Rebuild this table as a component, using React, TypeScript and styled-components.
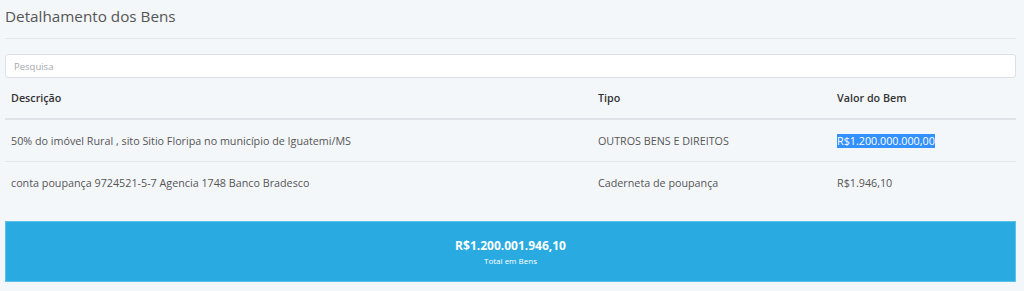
import { createGlobalStyle } from 'styled-components';
import styled from 'styled-components';

const GlobalStyle = createGlobalStyle`
  html, body {
    margin: 0;
    padding: 0;
    background: #f4f7fa;
  }
  body {
    font-family: "Open Sans", "Liberation Sans", sans-serif;
    color: #555;
  }
`

interface Bem {
  descricao: string;
  tipo: string;
  valor: string;
  selected?: boolean;
}

const bens: Bem[] = [
  {
    descricao: '50% do imóvel Rural , sito Sitio Floripa no município de Iguatemi/MS',
    tipo: 'OUTROS BENS E DIREITOS',
    valor: 'R$1.200.000.000,00',
    selected: true,
  },
  {
    descricao: 'conta poupança 9724521-5-7 Agencia 1748 Banco Bradesco',
    tipo: 'Caderneta de poupança',
    valor: 'R$1.946,10',
  },
]

export default function App() {
  return (
    <>
      <GlobalStyle />
      <Page>
        <Title>Detalhamento dos Bens</Title>
        <Divider />
        <SearchInput placeholder="Pesquisa" />
        <Table>
          <HeadRow>
            <HeadCell>Descrição</HeadCell>
            <HeadCell>Tipo</HeadCell>
            <HeadCell>Valor do Bem</HeadCell>
          </HeadRow>
          {bens.map((bem, i) => (
            <Row key={i} $last={i === bens.length - 1}>
              <Cell>{bem.descricao}</Cell>
              <Cell>{bem.tipo}</Cell>
              <Cell>{bem.selected ? <Selected>{bem.valor}</Selected> : bem.valor}</Cell>
            </Row>
          ))}
        </Table>
        <TotalBox>
          <TotalValue>R$1.200.001.946,10</TotalValue>
          <TotalLabel>Total em Bens</TotalLabel>
        </TotalBox>
      </Page>
    </>
  )
}

const Page = styled.div`
  display: flex;
  flex-direction: column;
  padding: 0 8px 0 5px;
  height: 291px;
  box-sizing: border-box;
`
const Title = styled.h3`
  margin: 0;
  padding-top: 4px;
  height: 34px;
  font-size: 15.25px;
  font-weight: 400;
  line-height: 24px;
  color: #555;
`
const Divider = styled.hr`
  margin: 0 0 15px;
  border: 0;
  border-top: 1px solid #e3e7ec;
`
const SearchInput = styled.input`
  box-sizing: border-box;
  width: 100%;
  height: 24px;
  padding: 0 8px;
  border: 1px solid #dcdfe3;
  border-radius: 3px;
  background: #fff;
  font-family: inherit;
  font-size: 9.5px;
  color: #555;
  outline: none;
  &::placeholder {
    color: #a4a8ad;
  }
`
const Table = styled.div`
  display: flex;
  flex-direction: column;
`
const HeadRow = styled.div`
  display: grid;
  grid-template-columns: 587px 239px 1fr;
  box-sizing: border-box;
  height: 42px;
  align-items: center;
  border-bottom: 2px solid #dfe2e6;
`
const HeadCell = styled.div`
  padding: 0 6px;
  font-size: 10.75px;
  font-weight: 600;
  color: #333;
`
const Row = styled.div<{ $last?: boolean }>`
  display: grid;
  grid-template-columns: 587px 239px 1fr;
  box-sizing: border-box;
  height: 42px;
  align-items: center;
  border-bottom: 1px solid ${p => (p.$last ? 'transparent' : '#e3e6ea')};
`
const Cell = styled.div`
  padding: 0 6px;
  font-size: 10.75px;
  color: #555;
`
const Selected = styled.span`
  background: #3390ff;
  color: #fff;
`
const TotalBox = styled.div`
  margin-top: 17px;
  height: 61px;
  box-sizing: border-box;
  background: #29abe2;
  border: 1px solid #5cc0ec;
  display: flex;
  flex-direction: column;
  align-items: center;
  justify-content: center;
  color: #fff;
`
const TotalValue = styled.div`
  font-size: 12px;
  font-weight: 700;
  line-height: 18px;
`
const TotalLabel = styled.div`
  font-size: 8px;
  line-height: 12px;
`
